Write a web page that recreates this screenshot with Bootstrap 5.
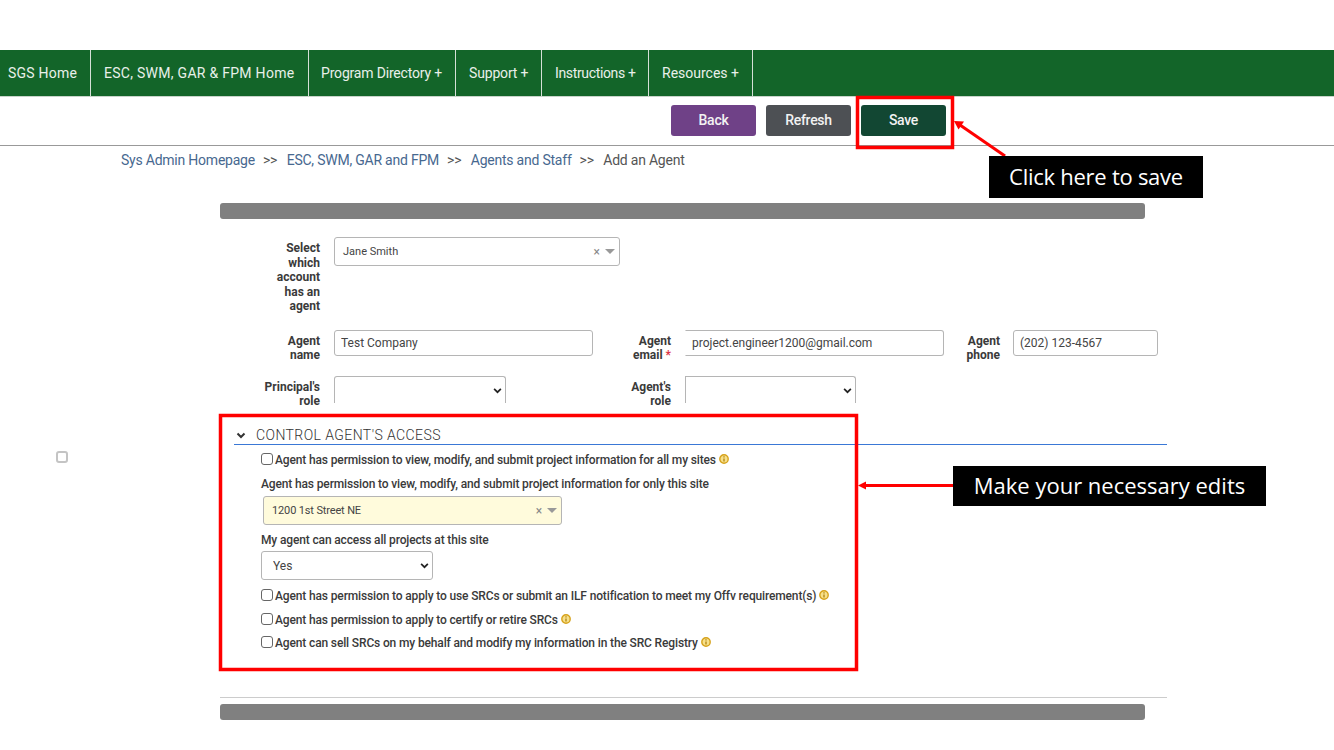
<!DOCTYPE html>
<html lang="en">
<head>
<meta charset="utf-8">
<title>Add an Agent</title>
<link href="https://cdn.jsdelivr.net/npm/bootstrap@5.3.0/dist/css/bootstrap.min.css" rel="stylesheet">
<style>
html,body{height:750px;overflow:hidden}
body{font-family:Roboto,"Liberation Sans",sans-serif;font-size:14px;color:#333;background:#fff;position:relative}
.topgap{height:50px}
.mainnav{background:#136529;height:47px;border-bottom:1px solid #c9d4cb}
.mainnav a{display:flex;align-items:center;height:100%;color:#e9f0ea;text-decoration:none;font-size:14px;border-right:1px solid #d5e0d7}
.mainnav a.i1{width:91px;padding-left:8px;letter-spacing:.22px}
.mainnav a.i2{width:218px;padding-left:13px;letter-spacing:.28px}
.mainnav a.i3{width:147px;padding-left:12px;letter-spacing:-.18px}
.mainnav a.i4{width:86px;padding-left:13px;letter-spacing:-.17px}
.mainnav a.i5{width:107px;padding-left:13px;letter-spacing:-.35px}
.mainnav a.i6{width:104px;padding-left:13px;letter-spacing:0}
.toolbar{height:49px;border-bottom:1px solid #999;padding:8px 0 0 671px;gap:10px}
.tbtn{width:85px;height:31px;padding:0;font-size:14px;font-weight:500;line-height:31px;border:0;border-radius:3px;color:#f2f2f2;letter-spacing:-.02em}
.tbtn:hover{color:#f2f2f2}
.t-back{background:#6f4187}
.t-refresh{background:#4d5054}
.t-save{background:#124733}
.crumbs{height:57px;padding:5px 0 0 121px;line-height:18px;font-size:14px;letter-spacing:-.016em;color:#555}
.crumbs a{color:#47688f;text-decoration:none}
.crumbs .sep{margin:0 9.5px 0 8px;font-size:14px;color:#555}
.mainrow{width:1334px}
.sidecol{width:220px;flex:none;padding:248px 0 0 56px}
.sidecheck{width:12px;height:12px;border:2px solid #c4c4c4;border-radius:3px;display:block;margin-top:-.5px}
.contentcol{width:947px;flex:none}
.graybar{width:925px;height:16px;background:gray;border-radius:3px}
.frow{display:flex;align-items:flex-start}
.flabel{font-size:12px;font-weight:700;line-height:14.5px;text-align:right;color:#3a3a3a;flex:none}
.tight{line-height:14px}
.w100{width:100px}
.fctl{height:26px;border:1px solid #b5b5b5;border-radius:3px;font-size:12px;padding:0 6px;color:#444;background:#fff;line-height:24px;flex:none;box-shadow:none}
.noleft{border-left-color:transparent;border-radius:0 3px 3px 0}
.sel2{display:flex;align-items:center;border:1px solid #b5b5b5;border-radius:3px;font-size:11px;font-weight:400;color:#444;flex:none;padding:0 4px 0 8px}
.sel2 .nm{flex:1;padding-top:1px}
.sel2 .clr{color:#888;font-size:12px;margin-right:5px;line-height:1}
.sel2 .car{width:0;height:0;border:5px solid transparent;border-top-color:#999;border-bottom:0}
.s1{width:286px;height:29px}
.r1{padding-top:18px;height:111px;margin-top:0}
.r1 .flabel{padding-top:4px}
.r2{height:46px}
.clipper{height:31px;overflow:hidden}
.fsel{width:172px;border:1px solid #b5b5b5;border-radius:3px;padding:0 24px 0 8px;font-size:12px;font-weight:400;color:#444;background-image:url("data:image/svg+xml,%3csvg xmlns='http://www.w3.org/2000/svg' viewBox='0 0 16 16'%3e%3cpath fill='none' stroke='%23222' stroke-width='3' d='M2 5l6 6 6-6'/%3e%3c/svg%3e");background-position:right 3px center;background-size:9px 9px;flex:none}
.cutoff{height:27px;border-bottom:0;border-radius:3px 3px 0 0}
.cutoff.noleft{border-radius:0 3px 0 0}
.gap14{margin-left:14px}
.sectionhd{margin:9px 0 0 14px;height:29px;border-bottom:1px solid #3a78d6;display:flex;align-items:center;padding:11px 0 0 2px}
.sectionhd span{font-size:14px;font-weight:300;letter-spacing:.03em;color:#333;margin-left:10px;line-height:19px}
.sec{padding:0 0 0 41px;font-size:12px;font-weight:500;color:#3a3a3a;letter-spacing:-.14px}
.ckline{display:flex;align-items:center;height:14px;line-height:14px}
.ckline input{width:12px;height:12px;margin:-2px 2px 0 0;border:1px solid #666;border-radius:2px;flex:none}
.ckline svg{margin-left:3px;flex:none;margin-top:-3px}
.lbl{line-height:14px;height:14px}
.s2{width:299px;height:29px;background:#fffbdc;margin:5px 0 0 2px;padding-left:8px}
.yes{display:block;height:29px;margin-top:4px;padding-left:11px}
.sep-hr{width:947px;border-top:1px solid #ccc;margin-top:47px;height:7px}
.overlay{position:absolute;left:0;top:0;pointer-events:none}
.callout{position:absolute;background:#000;color:#fff;font-family:"Open Sans","Noto Sans",sans-serif;font-size:22px;display:flex;align-items:center;justify-content:center;line-height:1;padding-bottom:3px}
.c1{left:989px;top:156px;width:214px;height:42px;letter-spacing:-.012em}
.c2{left:953px;top:466px;width:313px;height:40px;letter-spacing:0}
</style>
</head>
<body>
<div class="topgap"></div>
<nav class="mainnav d-flex">
  <a class="i1" href="#">SGS Home</a>
  <a class="i2" href="#">ESC, SWM, GAR &amp; FPM Home</a>
  <a class="i3" href="#">Program Directory +</a>
  <a class="i4" href="#">Support +</a>
  <a class="i5" href="#">Instructions +</a>
  <a class="i6" href="#">Resources +</a>
</nav>
<div class="toolbar d-flex">
  <button type="button" class="btn tbtn t-back">Back</button>
  <button type="button" class="btn tbtn t-refresh">Refresh</button>
  <button type="button" class="btn tbtn t-save">Save</button>
</div>
<div class="crumbs"><a href="#">Sys Admin Homepage</a><span class="sep">&gt;&gt;</span><a href="#">ESC, SWM, GAR and FPM</a><span class="sep">&gt;&gt;</span><a href="#">Agents and Staff</a><span class="sep">&gt;&gt;</span>Add an Agent</div>
<div class="mainrow d-flex">
  <div class="sidecol"><span class="sidecheck"></span></div>
  <div class="contentcol">
    <div class="graybar"></div>
    <div class="frow r1">
      <div class="flabel w100">Select<br>which<br>account<br>has an<br>agent</div>
      <div class="sel2 s1 gap14"><span class="nm">Jane Smith</span><span class="clr">×</span><span class="car"></span></div>
    </div>
    <div class="frow r2">
      <div class="flabel tight w100 pt-1">Agent<br>name</div>
      <input class="form-control fctl gap14" style="width:259px" value="Test Company">
      <div class="flabel tight pt-1" style="width:78px">Agent<br>email <span class="text-danger">*</span></div>
      <input class="form-control fctl noleft gap14" style="width:259px" value="project.engineer1200@gmail.com">
      <div class="flabel tight pt-1" style="width:56px">Agent<br>phone</div>
      <input class="form-control fctl" style="width:145px;margin-left:13px" value="(202) 123-4567">
    </div>
    <div class="frow clipper">
      <div class="flabel tight w100 pt-1">Principal's<br>role</div>
      <select class="form-select fsel cutoff gap14" aria-label="Principal's role"><option></option></select>
      <div class="flabel tight pt-1" style="width:165px">Agent's<br>role</div>
      <select class="form-select fsel cutoff noleft gap14" style="width:171px" aria-label="Agent's role"><option></option></select>
    </div>
    <div class="sectionhd">
      <svg width="10" height="7" viewBox="0 0 10 7"><path d="M1.5 1.5 5 5l3.5-3.5" fill="none" stroke="#333" stroke-width="2"/></svg>
      <span>CONTROL AGENT'S ACCESS</span>
    </div>
    <div class="sec">
      <div class="ckline" style="margin-top:8px"><input type="checkbox" class="form-check-input" aria-label="all sites">Agent has permission to view, modify, and submit project information for all my sites
        <svg width="10" height="10" viewBox="0 0 10 10"><circle cx="5" cy="5" r="4.2" fill="#f7e08a" stroke="#d6a21c" stroke-width="1.4"/><path d="M5 2.3v1.2M5 4.4v3.2" stroke="#a97a08" stroke-width="1.2"/></svg></div>
      <div class="lbl" style="margin-top:10px">Agent has permission to view, modify, and submit project information for only this site</div>
      <div class="sel2 s2"><span class="nm">1200 1st Street NE</span><span class="clr">×</span><span class="car"></span></div>
      <div class="lbl" style="margin-top:8px">My agent can access all projects at this site</div>
      <select class="form-select fsel yes" aria-label="Access all projects"><option>Yes</option></select>
      <div class="ckline" style="margin-top:9px"><input type="checkbox" class="form-check-input" aria-label="use SRCs">Agent has permission to apply to use SRCs or submit an ILF notification to meet my Offv requirement(s)
        <svg width="10" height="10" viewBox="0 0 10 10"><circle cx="5" cy="5" r="4.2" fill="#f7e08a" stroke="#d6a21c" stroke-width="1.4"/><path d="M5 2.3v1.2M5 4.4v3.2" stroke="#a97a08" stroke-width="1.2"/></svg></div>
      <div class="ckline" style="margin-top:10px"><input type="checkbox" class="form-check-input" aria-label="certify SRCs">Agent has permission to apply to certify or retire SRCs
        <svg width="10" height="10" viewBox="0 0 10 10"><circle cx="5" cy="5" r="4.2" fill="#f7e08a" stroke="#d6a21c" stroke-width="1.4"/><path d="M5 2.3v1.2M5 4.4v3.2" stroke="#a97a08" stroke-width="1.2"/></svg></div>
      <div class="ckline" style="margin-top:9px"><input type="checkbox" class="form-check-input" aria-label="sell SRCs">Agent can sell SRCs on my behalf and modify my information in the SRC Registry
        <svg width="10" height="10" viewBox="0 0 10 10"><circle cx="5" cy="5" r="4.2" fill="#f7e08a" stroke="#d6a21c" stroke-width="1.4"/><path d="M5 2.3v1.2M5 4.4v3.2" stroke="#a97a08" stroke-width="1.2"/></svg></div>
    </div>
    <div class="sep-hr"></div>
    <div class="graybar"></div>
  </div>
</div>
<svg class="overlay" width="1334" height="750" viewBox="0 0 1334 750">
  <rect x="857.500" y="97.500" width="95" height="50" fill="none" stroke="#f00" stroke-width="3.500"/>
  <rect x="220.500" y="415.500" width="636" height="254" fill="none" stroke="#f00" stroke-width="3.500"/>
  <path d="M1005 156 960 125" stroke="#f00" stroke-width="3" fill="none"/>
  <path d="M954 121l10 .5-5.500 8z" fill="#f00"/>
  <path d="M953 485.500H864" stroke="#f00" stroke-width="3" fill="none"/>
  <path d="M858 485.500l8-4v8z" fill="#f00"/>
</svg>
<div class="callout c1">Click here to save</div>
<div class="callout c2">Make your necessary edits</div>
</body>
</html>
